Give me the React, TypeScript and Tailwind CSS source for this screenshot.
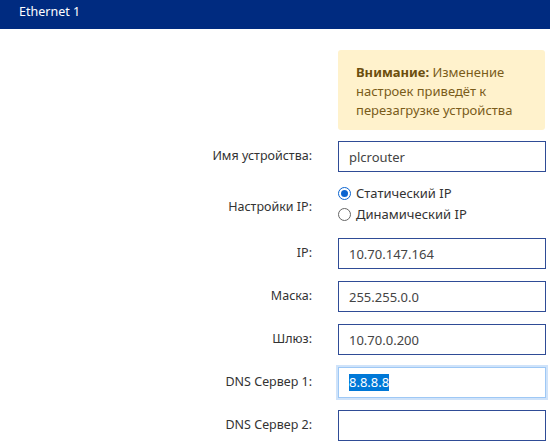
import { useState } from 'react';

const font = { fontFamily: '"Noto Sans", "Open Sans", sans-serif' };

function Field({ label, value, focused }: { label: string; value: string; focused?: boolean }) {
  return (
    <div className="flex items-center h-[31px] mb-[12px]">
      <div className="w-[312px] text-right text-[12.5px] text-[#333]">{label}</div>
      <div className="ml-[26px] w-[208px]">
        {focused ? (
          <div className="h-[31px] border-[1.5px] border-[#9ec8f5] ring-2 ring-[#cfe3fa] bg-white flex items-center px-[10px] text-[13px]">
            <span className="bg-[#0078d7] text-white leading-[17px]">{value}</span>
          </div>
        ) : (
          <input
            readOnly
            value={value}
            className="w-full h-[31px] border-[1.5px] border-[#2f4c96] bg-white px-[10px] text-[13px] text-[#444] outline-none"
            style={font}
          />
        )}
      </div>
    </div>
  );
}

export default function App() {
  const [mode, setMode] = useState<'static' | 'dhcp'>('static');

  return (
    <div className="w-[550px] h-[444px] bg-white overflow-hidden" style={font}>
      {/* Header */}
      <div className="h-[29px] bg-[#002b80] text-white text-[12.5px] pl-[19px] pt-[3px]">Ethernet 1</div>

      {/* Warning */}
      <div className="flex mt-[21px]">
        <div className="ml-[338px] w-[207px] rounded-[3px] bg-[#fff2cc] px-[18px] pt-[13px] pb-[10px] text-[13px] leading-[19px] text-[#7a5c1a]">
          <span className="font-bold text-[#6b4e0e]">Внимание:</span> Изменение настроек приведёт к перезагрузке устройства
        </div>
      </div>

      <div className="mt-[11px]">
        <Field label="Имя устройства:" value="plcrouter" />

        {/* IP mode */}
        <div className="flex items-start h-[43px] mb-[11px]">
          <div className="w-[312px] text-right text-[12.5px] leading-[18px] text-[#333] mt-[14px]">Настройки IP:</div>
          <div className="ml-[26px] flex flex-col gap-[2px] text-[13px] text-[#333]">
            <label className="flex items-center gap-[5px] h-[19px]" onClick={() => setMode('static')}>
              <span className="w-[13px] h-[13px] rounded-full border-[1.5px] border-[#0a64d0] flex items-center justify-center">
                {mode === 'static' && <span className="w-[7px] h-[7px] rounded-full bg-[#0a64d0]" />}
              </span>
              Статический IP
            </label>
            <label className="flex items-center gap-[5px] h-[19px]" onClick={() => setMode('dhcp')}>
              <span className="w-[13px] h-[13px] rounded-full border-[1.5px] border-[#666] flex items-center justify-center">
                {mode === 'dhcp' && <span className="w-[7px] h-[7px] rounded-full bg-[#0a64d0]" />}
              </span>
              Динамический IP
            </label>
          </div>
        </div>

        <Field label="IP:" value="10.70.147.164" />
        <Field label="Маска:" value="255.255.0.0" />
        <Field label="Шлюз:" value="10.70.0.200" />
        <Field label="DNS Сервер 1:" value="8.8.8.8" focused />
        <Field label="DNS Сервер 2:" value="" />
      </div>
    </div>
  );
}
